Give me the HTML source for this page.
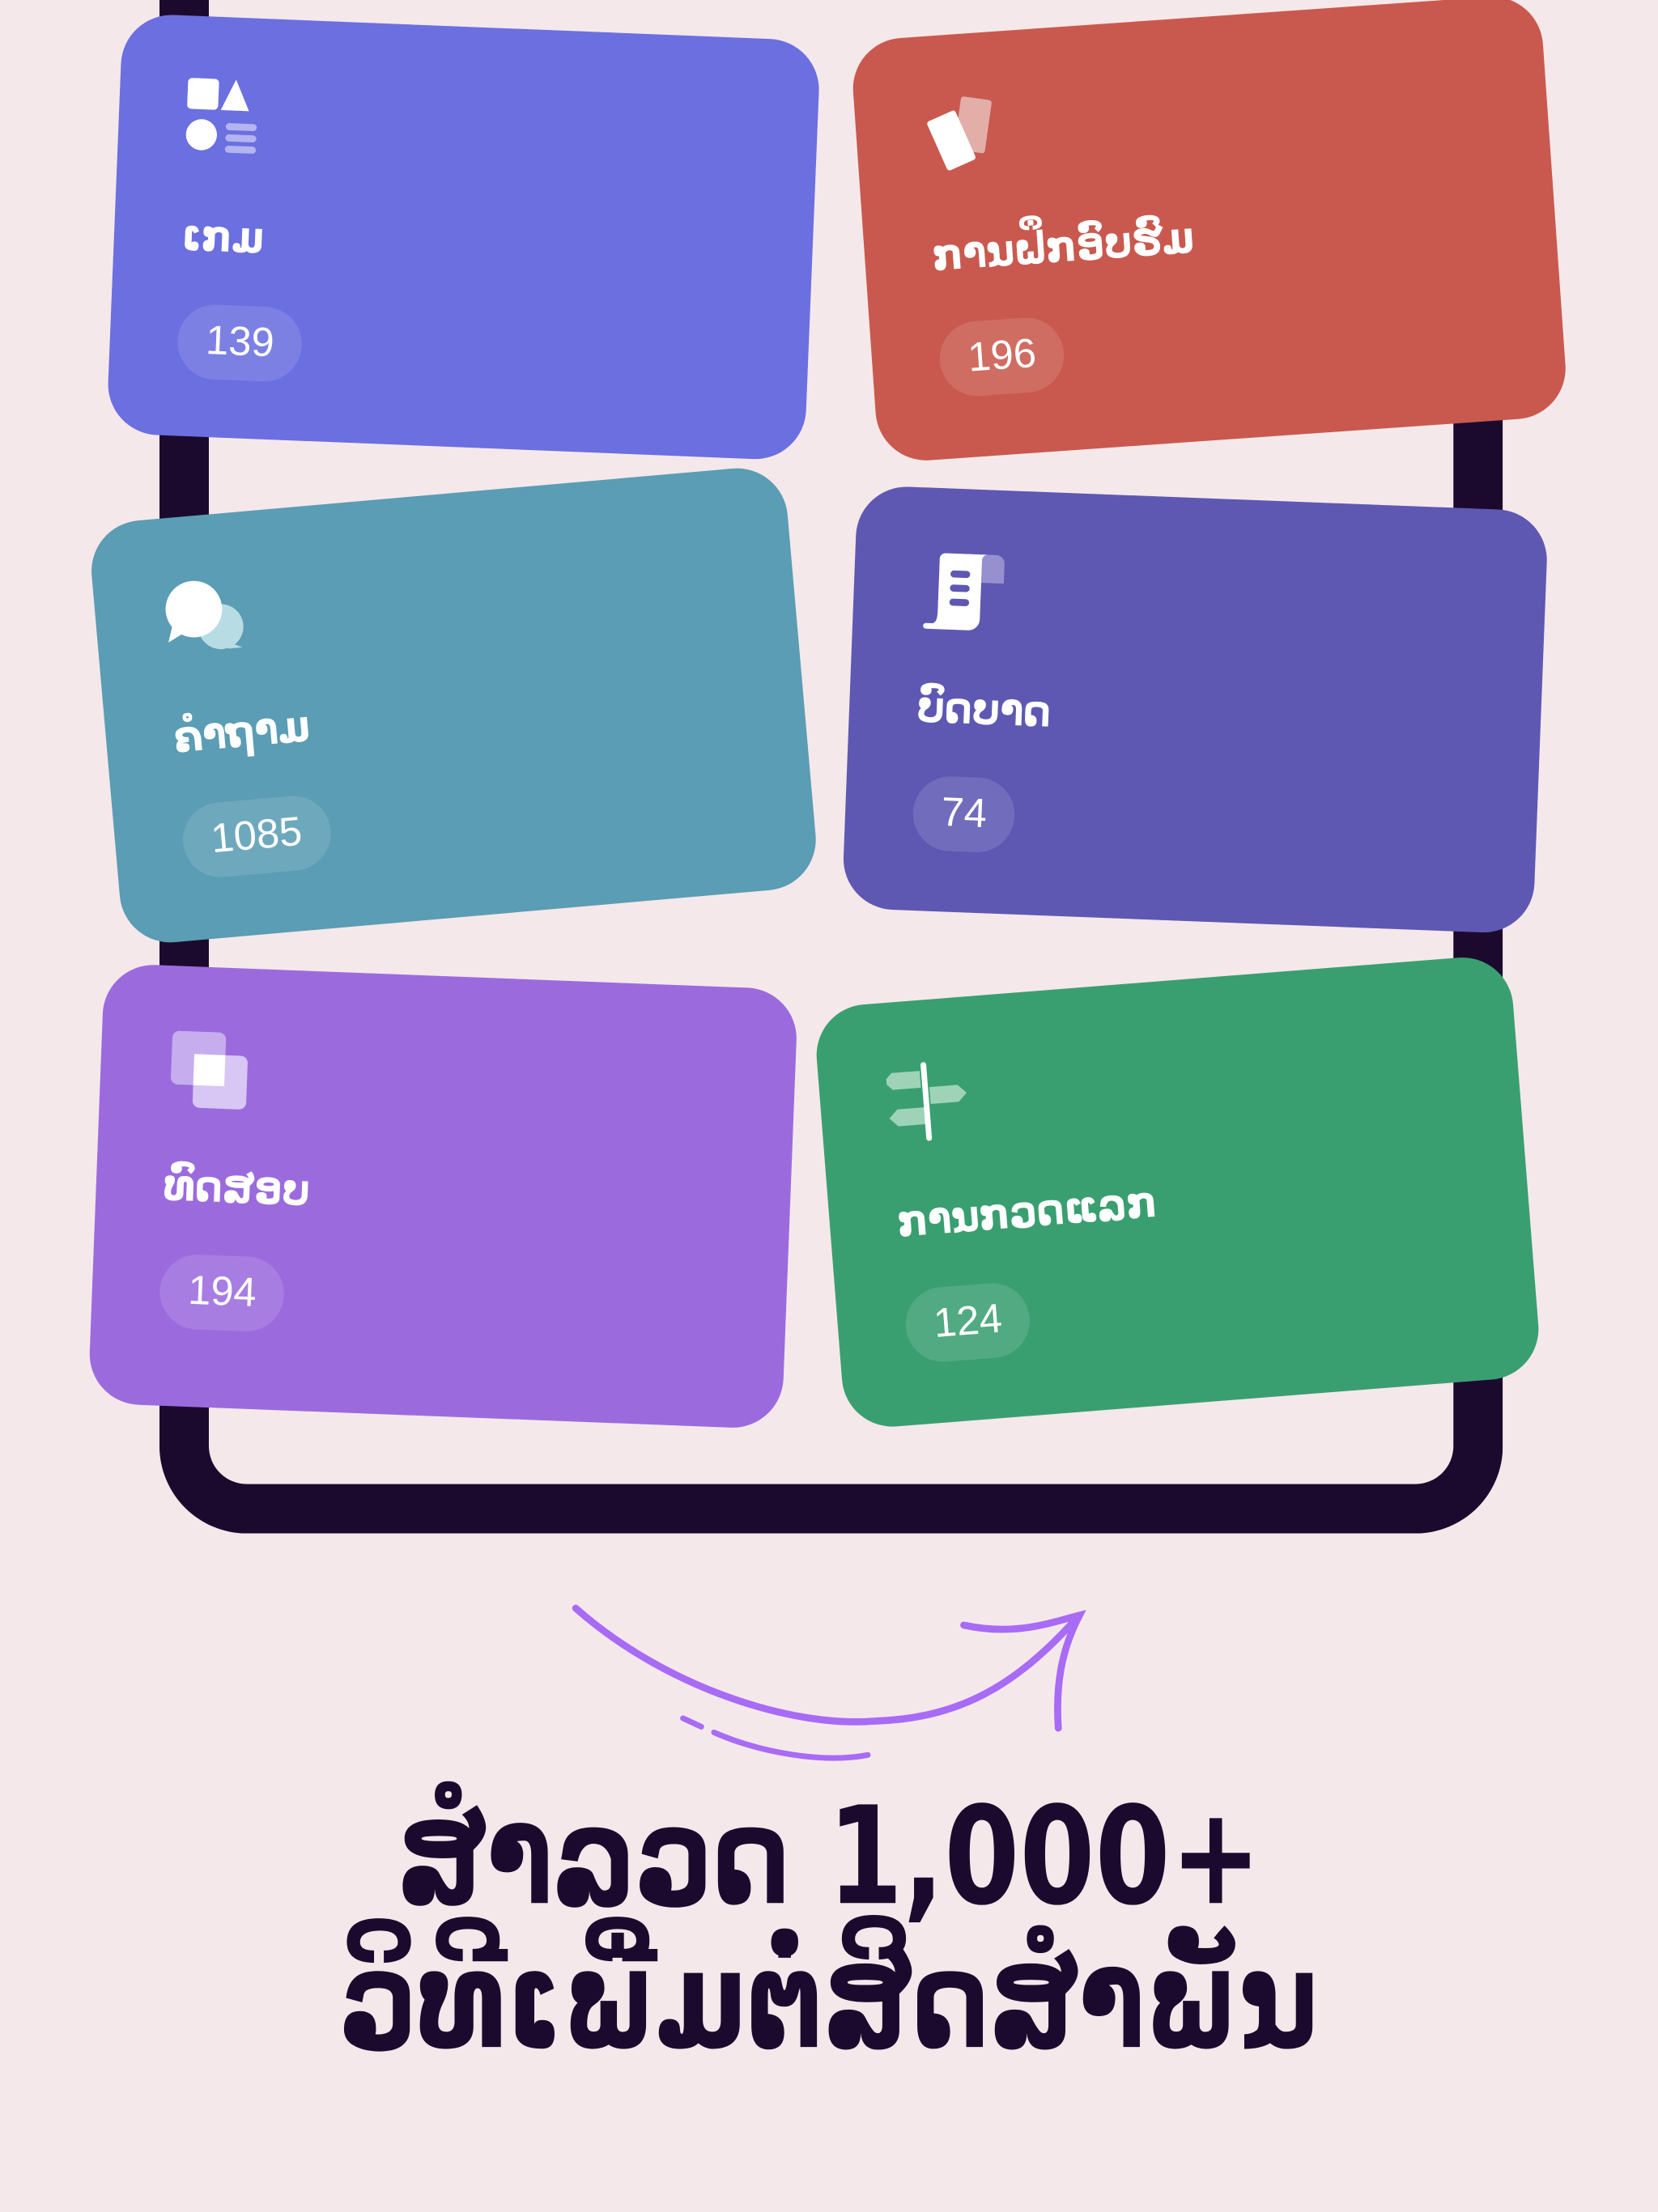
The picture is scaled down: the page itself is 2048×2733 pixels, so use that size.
<!DOCTYPE html>
<html><head><meta charset="utf-8"><style>
html,body{margin:0;padding:0;background:#F5E8EA;}
body{width:2048px;height:2732px;overflow:hidden;position:relative;}
#s{position:absolute;left:0;top:0;width:1175px;height:1568px;transform:scale(1.743);transform-origin:0 0;font-family:"Liberation Sans","DejaVu Sans",sans-serif;}
.phone{position:absolute;left:113px;top:-80px;width:882px;height:1132px;border:35px solid #1C0A2E;border-top:none;border-radius:0 0 62px 62px;}
.card{position:absolute;border-radius:36px;color:#fff;box-sizing:border-box;padding:44px 48px;}
.card .ic{width:60px;height:60px;position:relative;}
.card .lb{font-family:"DejaVu Sans",sans-serif;font-weight:bold;font-size:31px;margin-top:34px;height:44px;transform:scaleX(0.88);transform-origin:0 0;white-space:nowrap;}
.card .pl{margin-top:22px;display:inline-block;background:rgba(255,255,255,.12);border-radius:28px;padding:10px 20px;font-size:29px;font-weight:500;}
.t{position:absolute;left:0;width:1175px;text-align:center;color:#1C0A2E;font-weight:bold;font-family:"DejaVu Sans",sans-serif;font-size:96px;line-height:1;transform:scaleX(0.8);transform-origin:588px 0;}
</style></head><body><div id="s">
<div class="phone"></div>

<div class="card" style="left:81px;top:19px;width:495px;height:298px;background:#6B6FE0;transform:rotate(2.3deg)">
<div class="ic"><svg width="60" height="60"><rect x="0" y="0" width="22" height="22" rx="3" fill="#fff"/><path d="M34 0 L44 22 L24 22Z" fill="#fff"/><circle cx="11" cy="40" r="11" fill="#fff"/><rect x="28" y="31" width="22" height="5" rx="2.5" fill="#B3B4F0"/><rect x="28" y="39" width="22" height="5" rx="2.5" fill="#B3B4F0"/><rect x="28" y="47" width="22" height="5" rx="2.5" fill="#B3B4F0"/></svg></div>
<div class="lb">ເກມ</div><div class="pl">139</div></div>

<div class="card" style="left:612px;top:12px;width:490px;height:300px;background:#C9594E;transform:rotate(-4deg)">
<div class="ic"><svg width="60" height="60"><rect x="24" y="2" width="22" height="38" rx="2" fill="#E3ADA8" transform="rotate(12 35 21)"/><rect x="8" y="12" width="22" height="38" rx="2" fill="#fff" transform="rotate(-20 19 31)"/></svg></div>
<div class="lb">ການຝຶກອົບຮົມ</div><div class="pl">196</div></div>

<div class="card" style="left:74px;top:350px;width:495px;height:300px;background:#5A9DB4;transform:rotate(-5deg)">
<div class="ic"><svg width="60" height="60"><circle cx="40" cy="36" r="16" fill="#B8DCE4"/><path d="M42 46 l12 6 -10 0z" fill="#B8DCE4"/><circle cx="22" cy="22" r="20" fill="#fff"/><path d="M6 32 l-4 12 12 -6z" fill="#fff"/></svg></div>
<div class="lb">ຄຳຖາມ</div><div class="pl">1085</div></div>

<div class="card" style="left:602px;top:353px;width:490px;height:300px;background:#5E58B3;transform:rotate(2.2deg)">
<div class="ic"><svg width="60" height="60"><path d="M42 2 h10 a6 6 0 0 1 6 6 v14 h-16z" fill="#9690D0"/><path d="M14 2 h32 a4 4 0 0 0 -4 4 v42 a8 8 0 0 1 -8 8 h-30 a2 2 0 0 1 0 -4 h4 c4 0 4 -6 4 -10 v-36 a4 4 0 0 1 4 -4z" fill="#fff"/><rect x="20" y="14" width="14" height="5" rx="2.5" fill="#5E58B3"/><rect x="20" y="24" width="14" height="5" rx="2.5" fill="#5E58B3"/><rect x="20" y="34" width="14" height="5" rx="2.5" fill="#5E58B3"/></svg></div>
<div class="lb">ບົດບາດ</div><div class="pl">74</div></div>

<div class="card" style="left:68px;top:692px;width:492px;height:312px;background:#9B6BDE;transform:rotate(2.2deg)">
<div class="ic"><svg width="60" height="60"><rect x="2" y="2" width="38" height="38" rx="5" fill="#C6AEEE"/><rect x="18" y="18" width="38" height="38" rx="5" fill="#D8C6F4"/><rect x="18" y="18" width="22" height="22" fill="#fff"/></svg></div>
<div class="lb">ທົດສອບ</div><div class="pl">194</div></div>

<div class="card" style="left:587px;top:695px;width:495px;height:300px;background:#3A9F70;transform:rotate(-4.5deg)">
<div class="ic"><svg width="60" height="60"><path d="M4 6 h20 v12 h-20 l-6 -6z" fill="#9ED3B8"/><path d="M30 18 h20 l6 6 -6 6 h-20z" fill="#9ED3B8"/><path d="M6 32 h20 v12 h-20 l-6 -6z" fill="#9ED3B8"/><rect x="25" y="0" width="4" height="56" rx="2" fill="#fff"/></svg></div>
<div class="lb">ການກວດແລກ</div><div class="pl">124</div></div>

<svg style="position:absolute;left:0;top:0" width="1175" height="1568">
<path d="M408 1140 C470 1195 560 1225 620 1220 C680 1218 720 1195 763 1147" fill="none" stroke="#A86BF5" stroke-width="5" stroke-linecap="round"/>
<path d="M683 1152 C720 1160 745 1150 765 1145 C752 1170 748 1195 750 1225" fill="none" stroke="#A86BF5" stroke-width="5" stroke-linecap="round"/>
<path d="M484 1218 L497 1224" stroke="#A86BF5" stroke-width="4" stroke-linecap="round"/>
<path d="M506 1228 C540 1243 585 1250 615 1244" fill="none" stroke="#A86BF5" stroke-width="4" stroke-linecap="round"/>
</svg>

<div class="t" style="top:1268px">ສຳລວດ 1,000+</div>
<div class="t" style="top:1370px">ວິທີເພີ່ມຕໍ່ສິດສຳພັນ</div>
</div></body></html>
